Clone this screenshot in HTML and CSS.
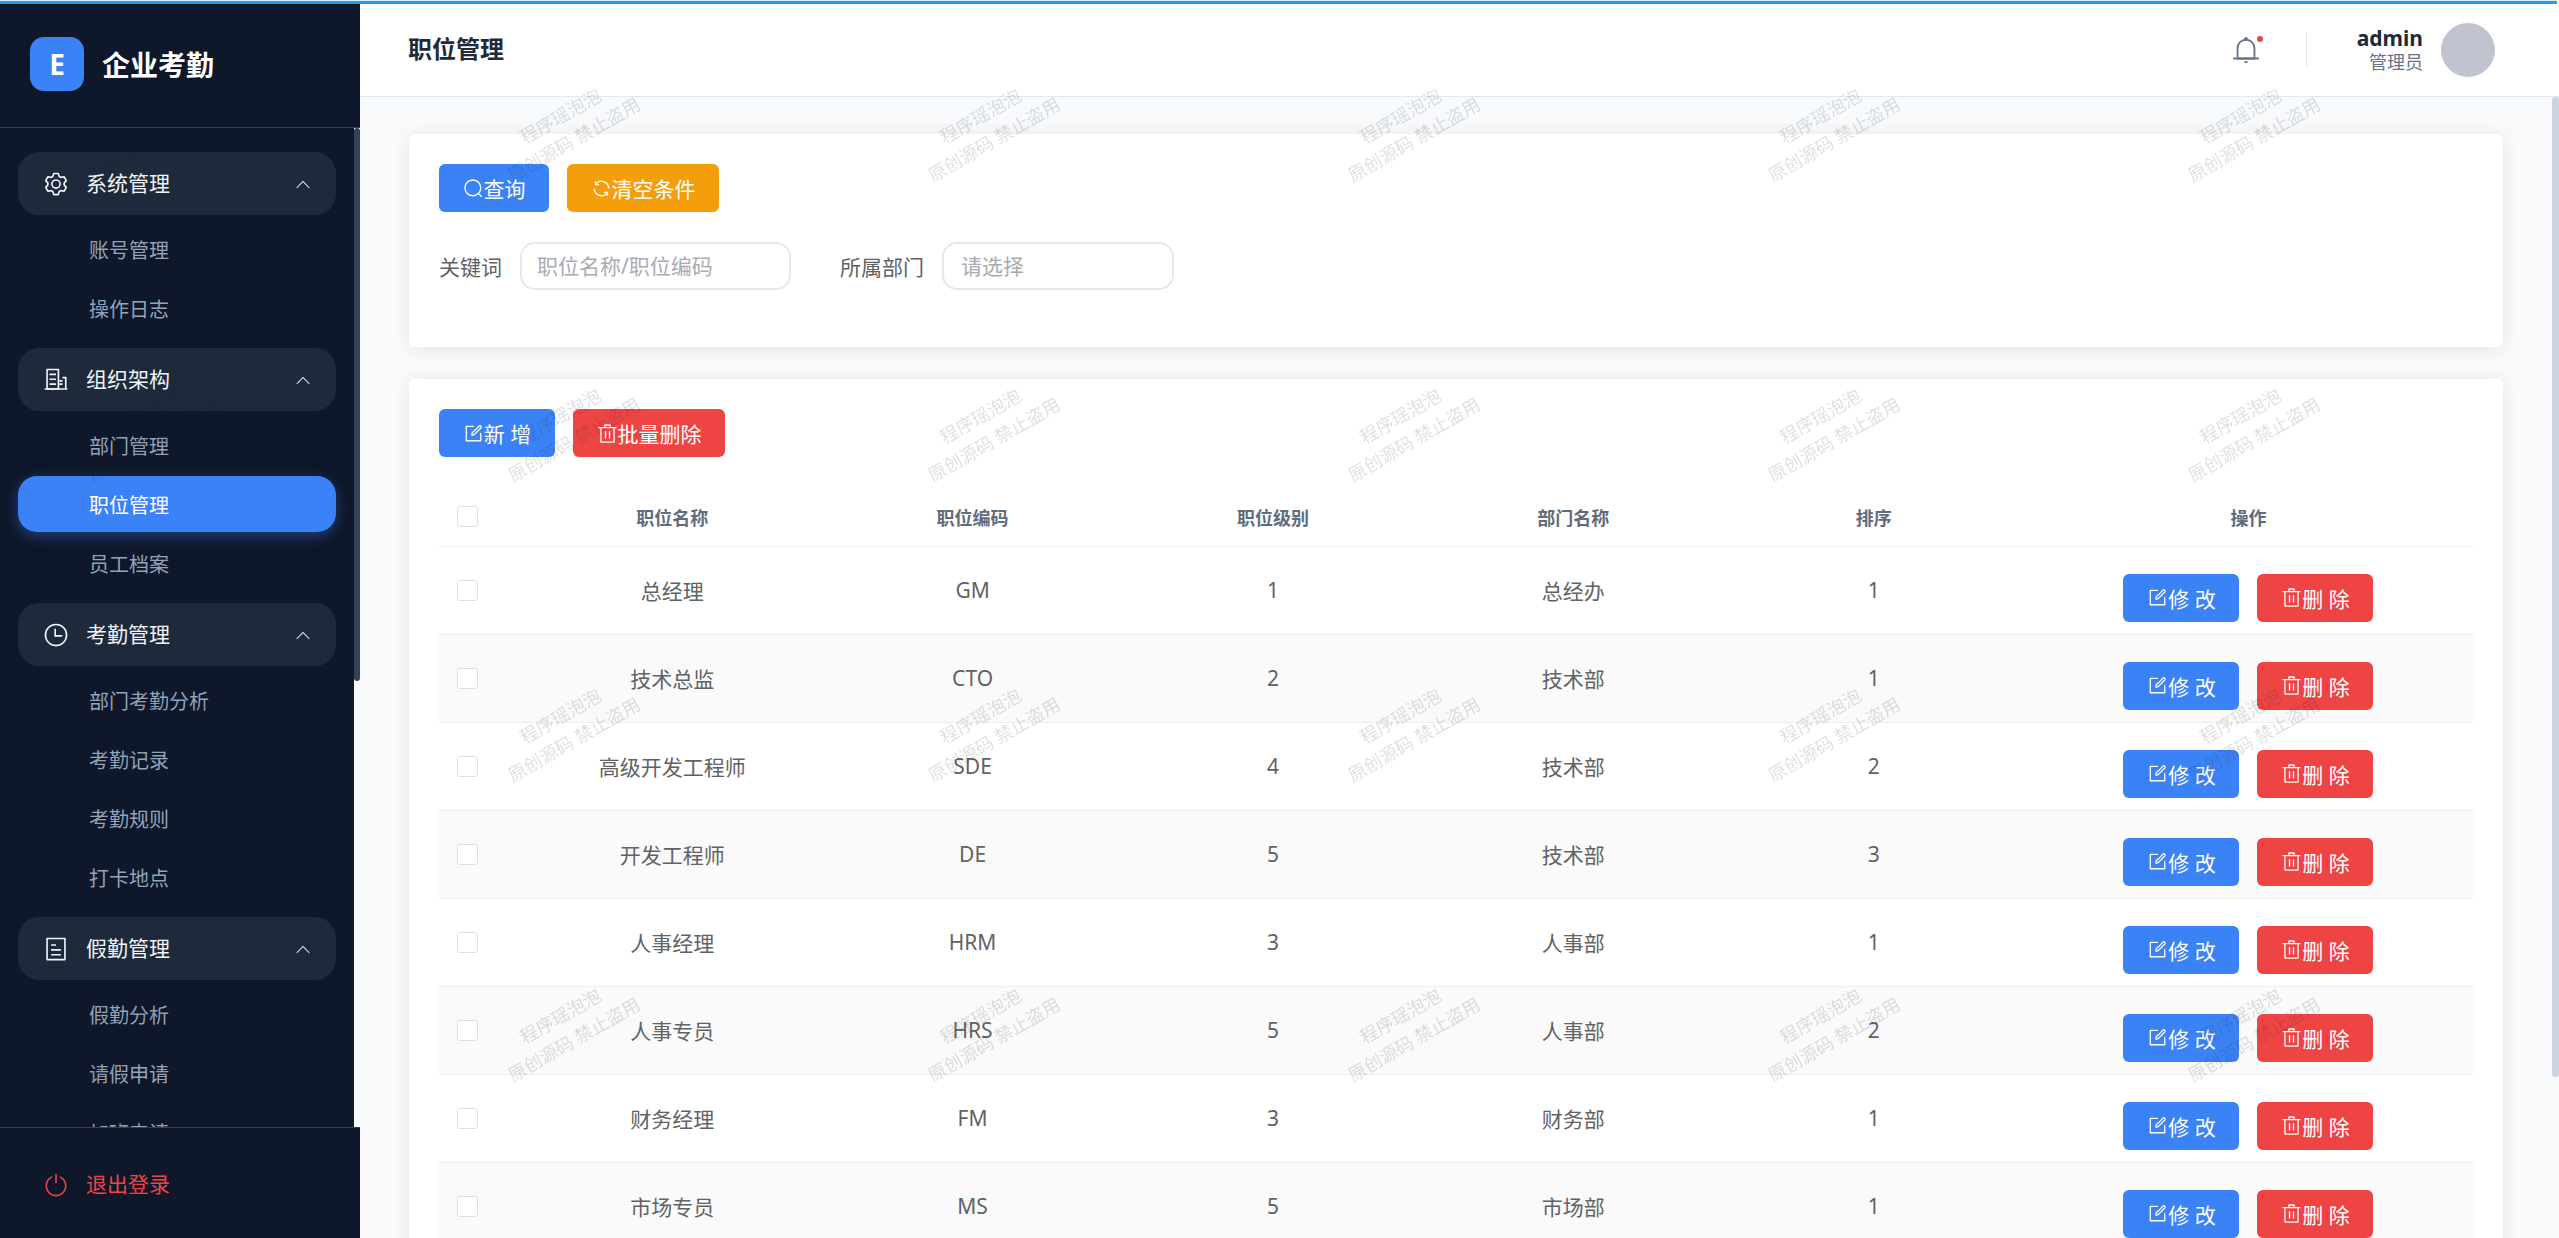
FILE: index.html
```html
<!DOCTYPE html>
<html lang="zh-CN">
<head>
<meta charset="utf-8">
<title>职位管理</title>
<link rel="stylesheet" href="styles.css">
</head>
<body>
<svg class="sprite" xmlns="http://www.w3.org/2000/svg">
  <symbol id="i-search" viewBox="0 0 1024 1024"><path d="m795.904 750.72 124.992 124.928a32 32 0 0 1-45.248 45.248L750.656 795.904a416 416 0 1 1 45.248-45.248zM480 832a352 352 0 1 0 0-704 352 352 0 0 0 0 704"/></symbol>
  <symbol id="i-refresh" viewBox="0 0 1024 1024"><path d="M771.776 794.88A384 384 0 0 1 128 512h64a320 320 0 0 0 555.712 216.448H654.72a32 32 0 1 1 0-64h149.056a32 32 0 0 1 32 32v148.928a32 32 0 1 1-64 0v-50.56zM276.288 295.616h92.992a32 32 0 0 1 0 64H220.16a32 32 0 0 1-32-32V178.56a32 32 0 0 1 64 0v50.56A384 384 0 0 1 896.128 512h-64a320 320 0 0 0-555.776-216.384z"/></symbol>
  <symbol id="i-edit" viewBox="0 0 1024 1024"><path d="M832 512a32 32 0 1 1 64 0v352a32 32 0 0 1-32 32H160a32 32 0 0 1-32-32V160a32 32 0 0 1 32-32h352a32 32 0 0 1 0 64H192v640h640z"/><path d="m469.952 554.24 52.8-7.552L847.104 222.4a32 32 0 1 0-45.248-45.248L477.44 501.44l-7.552 52.8zm422.4-422.4a96 96 0 0 1 0 135.808l-331.84 331.84a32 32 0 0 1-18.112 9.088L436.8 623.68a32 32 0 0 1-36.224-36.224l15.104-105.6a32 32 0 0 1 9.024-18.112l331.904-331.84a96 96 0 0 1 135.744 0z"/></symbol>
  <symbol id="i-delete" viewBox="0 0 1024 1024"><path d="M160 256H96a32 32 0 0 1 0-64h256V95.936a32 32 0 0 1 32-32h256a32 32 0 0 1 32 32V192h256a32 32 0 1 1 0 64h-64v672a32 32 0 0 1-32 32H192a32 32 0 0 1-32-32zm448-64v-64H416v64zM224 896h576V256H224zm192-128a32 32 0 0 1-32-32V416a32 32 0 0 1 64 0v320a32 32 0 0 1-32 32m192 0a32 32 0 0 1-32-32V416a32 32 0 0 1 64 0v320a32 32 0 0 1-32 32"/></symbol>
  <symbol id="i-up" viewBox="0 0 1024 1024"><path d="m488.832 344.32-339.84 356.672a32 32 0 0 0 0 44.16l.384.384a29.44 29.44 0 0 0 42.688 0l320-335.872 319.872 335.872a29.44 29.44 0 0 0 42.688 0l.384-.384a32 32 0 0 0 0-44.16L535.168 344.32a32 32 0 0 0-46.336 0"/></symbol>
  <symbol id="i-setting" viewBox="0 0 1024 1024"><path d="M600.704 64a32 32 0 0 1 30.464 22.208l35.2 109.376c14.784 7.232 28.928 15.36 42.432 24.512l112.384-24.192a32 32 0 0 1 34.432 15.36L944.32 364.8a32 32 0 0 1-4.032 37.504l-77.12 85.12a357.12 357.12 0 0 1 0 49.024l77.12 85.248a32 32 0 0 1 4.032 37.504l-88.704 153.6a32 32 0 0 1-34.432 15.296L708.8 803.904c-13.44 9.088-27.648 17.28-42.368 24.512l-35.264 109.376A32 32 0 0 1 600.704 960H423.296a32 32 0 0 1-30.464-22.208L357.696 828.48a351.616 351.616 0 0 1-42.56-24.64l-112.32 24.256a32 32 0 0 1-34.432-15.36L79.68 659.2a32 32 0 0 1 4.032-37.504l77.12-85.248a357.12 357.12 0 0 1 0-48.896l-77.12-85.248A32 32 0 0 1 79.68 364.8l88.704-153.6a32 32 0 0 1 34.432-15.296l112.32 24.256c13.568-9.152 27.776-17.408 42.56-24.64l35.2-109.312A32 32 0 0 1 423.232 64H600.64zm-23.424 64H446.72l-36.352 113.088-24.512 11.968a294.113 294.113 0 0 0-34.816 20.096l-22.656 15.36-116.224-25.088-65.28 113.152 79.68 88.192-1.92 27.136a293.12 293.12 0 0 0 0 40.192l1.92 27.136-79.808 88.192 65.344 113.152 116.224-25.024 22.656 15.296a294.113 294.113 0 0 0 34.816 20.096l24.512 11.968L446.72 896h130.688l36.48-113.152 24.448-11.904a288.282 288.282 0 0 0 34.752-20.096l22.592-15.296 116.288 25.024 65.28-113.152-79.744-88.192 1.92-27.136a293.12 293.12 0 0 0 0-40.256l-1.92-27.136 79.808-88.128-65.344-113.152-116.288 24.96-22.592-15.232a287.616 287.616 0 0 0-34.752-20.096l-24.448-11.904L577.344 128zM512 320a192 192 0 1 1 0 384 192 192 0 0 1 0-384m0 64a128 128 0 1 0 0 256 128 128 0 0 0 0-256"/></symbol>
  <symbol id="i-office" viewBox="0 0 1024 1024"><path d="M192 128v704h384V128zm-32-64h448a32 32 0 0 1 32 32v800H128V96a32 32 0 0 1 32-32"/><path d="M256 256h256v64H256zm0 192h256v64H256zm0 192h256v64H256zm384-128h128v64H640zm0 128h128v64H640zM768 384h128a32 32 0 0 1 32 32v416h-64V448H768zM64 832h896v64H64z"/></symbol>
  <symbol id="i-clock" viewBox="0 0 1024 1024"><path d="M512 896a384 384 0 1 0 0-768 384 384 0 0 0 0 768m0 64a448 448 0 1 1 0-896 448 448 0 0 1 0 896"/><path d="M480 256a32 32 0 0 1 32 32v256a32 32 0 0 1-64 0V288a32 32 0 0 1 32-32"/><path d="M480 512h256q32 0 32 32t-32 32H480q-32 0-32-32t32-32"/></symbol>
  <symbol id="i-tickets" viewBox="0 0 1024 1024"><path d="M192 128v768h640V128zm-32-64h704a32 32 0 0 1 32 32v832a32 32 0 0 1-32 32H160a32 32 0 0 1-32-32V96a32 32 0 0 1 32-32m160 448h384v64H320zm0-192h192v64H320zm0 384h384v64H320z"/></symbol>
  <symbol id="i-power" viewBox="0 0 1024 1024"><path d="M352 159.872V230.4a352 352 0 1 0 320 0v-70.528A416.128 416.128 0 0 1 512 960a416 416 0 0 1-160-800.128z"/><path d="M512 64q32 0 32 32v320q0 32-32 32t-32-32V96q0-32 32-32"/></symbol>
  <symbol id="i-bell" viewBox="0 0 1024 1024"><path d="M512 64a64 64 0 0 1 64 64v64H448v-64a64 64 0 0 1 64-64"/><path d="M256 768h512V448a256 256 0 1 0-512 0zm256-640a320 320 0 0 1 320 320v384H192V448a320 320 0 0 1 320-320"/><path d="M96 768h832q32 0 32 32t-32 32H96q-32 0-32-32t32-32m352 128h128a64 64 0 0 1-128 0"/></symbol>
</svg>

<div class="top-line"></div>
<div class="app">
  <aside class="sidebar">
    <div class="brand">
      <div class="logo">E</div>
      <div class="brand-name">企业考勤</div>
    </div>
    <div class="side-middle">
      <nav class="nav">
        <section class="group">
          <div class="group-head"><svg class="g-icon"><use href="#i-setting"/></svg><span class="g-title">系统管理</span><svg class="g-arrow"><use href="#i-up"/></svg></div>
          <a class="item">账号管理</a>
          <a class="item">操作日志</a>
        </section>
        <section class="group">
          <div class="group-head"><svg class="g-icon"><use href="#i-office"/></svg><span class="g-title">组织架构</span><svg class="g-arrow"><use href="#i-up"/></svg></div>
          <a class="item">部门管理</a>
          <a class="item item-active">职位管理</a>
          <a class="item">员工档案</a>
        </section>
        <section class="group">
          <div class="group-head"><svg class="g-icon"><use href="#i-clock"/></svg><span class="g-title">考勤管理</span><svg class="g-arrow"><use href="#i-up"/></svg></div>
          <a class="item">部门考勤分析</a>
          <a class="item">考勤记录</a>
          <a class="item">考勤规则</a>
          <a class="item">打卡地点</a>
        </section>
        <section class="group">
          <div class="group-head"><svg class="g-icon"><use href="#i-tickets"/></svg><span class="g-title">假勤管理</span><svg class="g-arrow"><use href="#i-up"/></svg></div>
          <a class="item">假勤分析</a>
          <a class="item">请假申请</a>
          <a class="item">加班申请</a>
        </section>
      </nav>
      <div class="side-track"><div class="side-thumb"></div></div>
    </div>
    <div class="logout"><svg class="g-icon"><use href="#i-power"/></svg><span class="g-title">退出登录</span></div>
  </aside>

  <div class="main">
    <header class="topbar">
      <h1 class="page-title">职位管理</h1>
      <div class="top-right">
        <div class="bell"><svg class="bell-icon"><use href="#i-bell"/></svg><i class="bell-dot"></i></div>
        <div class="top-divider"></div>
        <div class="user">
          <div class="user-name">admin</div>
          <div class="user-role">管理员</div>
        </div>
        <div class="avatar"></div>
      </div>
    </header>
    <div class="body-row">
      <main class="content">
        <section class="card card-filter">
          <div class="btn-row">
            <button class="btn btn-blue"><svg class="b-icon"><use href="#i-search"/></svg>查询</button>
            <button class="btn btn-orange"><svg class="b-icon"><use href="#i-refresh"/></svg>清空条件</button>
          </div>
          <div class="filter-row">
            <label class="f-label">关键词</label>
            <input class="f-input f-keyword" placeholder="职位名称/职位编码">
            <label class="f-label f-label-second">所属部门</label>
            <input class="f-input f-dept" placeholder="请选择">
          </div>
        </section>
        <section class="card">
          <div class="btn-row table-tools">
            <button class="btn btn-blue btn-wide"><svg class="b-icon"><use href="#i-edit"/></svg>新 增</button>
            <button class="btn btn-red"><svg class="b-icon"><use href="#i-delete"/></svg>批量删除</button>
          </div>
          <table class="table">
            <colgroup><col class="c-check"><col class="c-data"><col class="c-data"><col class="c-data"><col class="c-data"><col class="c-data"><col></colgroup>
            <thead>
              <tr><th class="td-check"><span class="check"></span></th><th>职位名称</th><th>职位编码</th><th>职位级别</th><th>部门名称</th><th>排序</th><th>操作</th></tr>
            </thead>
            <tbody>
              <tr><td class="td-check"><span class="check"></span></td><td>总经理</td><td>GM</td><td>1</td><td>总经办</td><td>1</td><td class="ops"><button class="btn btn-blue btn-wide"><svg class="b-icon"><use href="#i-edit"/></svg>修 改</button><button class="btn btn-red btn-wide"><svg class="b-icon"><use href="#i-delete"/></svg>删 除</button></td></tr>
              <tr><td class="td-check"><span class="check"></span></td><td>技术总监</td><td>CTO</td><td>2</td><td>技术部</td><td>1</td><td class="ops"><button class="btn btn-blue btn-wide"><svg class="b-icon"><use href="#i-edit"/></svg>修 改</button><button class="btn btn-red btn-wide"><svg class="b-icon"><use href="#i-delete"/></svg>删 除</button></td></tr>
              <tr><td class="td-check"><span class="check"></span></td><td>高级开发工程师</td><td>SDE</td><td>4</td><td>技术部</td><td>2</td><td class="ops"><button class="btn btn-blue btn-wide"><svg class="b-icon"><use href="#i-edit"/></svg>修 改</button><button class="btn btn-red btn-wide"><svg class="b-icon"><use href="#i-delete"/></svg>删 除</button></td></tr>
              <tr><td class="td-check"><span class="check"></span></td><td>开发工程师</td><td>DE</td><td>5</td><td>技术部</td><td>3</td><td class="ops"><button class="btn btn-blue btn-wide"><svg class="b-icon"><use href="#i-edit"/></svg>修 改</button><button class="btn btn-red btn-wide"><svg class="b-icon"><use href="#i-delete"/></svg>删 除</button></td></tr>
              <tr><td class="td-check"><span class="check"></span></td><td>人事经理</td><td>HRM</td><td>3</td><td>人事部</td><td>1</td><td class="ops"><button class="btn btn-blue btn-wide"><svg class="b-icon"><use href="#i-edit"/></svg>修 改</button><button class="btn btn-red btn-wide"><svg class="b-icon"><use href="#i-delete"/></svg>删 除</button></td></tr>
              <tr><td class="td-check"><span class="check"></span></td><td>人事专员</td><td>HRS</td><td>5</td><td>人事部</td><td>2</td><td class="ops"><button class="btn btn-blue btn-wide"><svg class="b-icon"><use href="#i-edit"/></svg>修 改</button><button class="btn btn-red btn-wide"><svg class="b-icon"><use href="#i-delete"/></svg>删 除</button></td></tr>
              <tr><td class="td-check"><span class="check"></span></td><td>财务经理</td><td>FM</td><td>3</td><td>财务部</td><td>1</td><td class="ops"><button class="btn btn-blue btn-wide"><svg class="b-icon"><use href="#i-edit"/></svg>修 改</button><button class="btn btn-red btn-wide"><svg class="b-icon"><use href="#i-delete"/></svg>删 除</button></td></tr>
              <tr><td class="td-check"><span class="check"></span></td><td>市场专员</td><td>MS</td><td>5</td><td>市场部</td><td>1</td><td class="ops"><button class="btn btn-blue btn-wide"><svg class="b-icon"><use href="#i-edit"/></svg>修 改</button><button class="btn btn-red btn-wide"><svg class="b-icon"><use href="#i-delete"/></svg>删 除</button></td></tr>
            </tbody>
          </table>
        </section>
      </main>
      <div class="main-track"><div class="main-thumb"></div></div>
    </div>
  </div>
</div>

<div class="watermarks">
  <div class="wm-grid">
    <div class="wm"><div class="wm-text">程序瑶泡泡<br>原创源码 禁止盗用</div></div>
    <div class="wm"><div class="wm-text">程序瑶泡泡<br>原创源码 禁止盗用</div></div>
    <div class="wm"><div class="wm-text">程序瑶泡泡<br>原创源码 禁止盗用</div></div>
    <div class="wm"><div class="wm-text">程序瑶泡泡<br>原创源码 禁止盗用</div></div>
    <div class="wm"><div class="wm-text">程序瑶泡泡<br>原创源码 禁止盗用</div></div>
    <div class="wm"><div class="wm-text">程序瑶泡泡<br>原创源码 禁止盗用</div></div>
    <div class="wm"><div class="wm-text">程序瑶泡泡<br>原创源码 禁止盗用</div></div>
    <div class="wm"><div class="wm-text">程序瑶泡泡<br>原创源码 禁止盗用</div></div>
    <div class="wm"><div class="wm-text">程序瑶泡泡<br>原创源码 禁止盗用</div></div>
    <div class="wm"><div class="wm-text">程序瑶泡泡<br>原创源码 禁止盗用</div></div>
    <div class="wm"><div class="wm-text">程序瑶泡泡<br>原创源码 禁止盗用</div></div>
    <div class="wm"><div class="wm-text">程序瑶泡泡<br>原创源码 禁止盗用</div></div>
    <div class="wm"><div class="wm-text">程序瑶泡泡<br>原创源码 禁止盗用</div></div>
    <div class="wm"><div class="wm-text">程序瑶泡泡<br>原创源码 禁止盗用</div></div>
    <div class="wm"><div class="wm-text">程序瑶泡泡<br>原创源码 禁止盗用</div></div>
    <div class="wm"><div class="wm-text">程序瑶泡泡<br>原创源码 禁止盗用</div></div>
    <div class="wm"><div class="wm-text">程序瑶泡泡<br>原创源码 禁止盗用</div></div>
    <div class="wm"><div class="wm-text">程序瑶泡泡<br>原创源码 禁止盗用</div></div>
    <div class="wm"><div class="wm-text">程序瑶泡泡<br>原创源码 禁止盗用</div></div>
    <div class="wm"><div class="wm-text">程序瑶泡泡<br>原创源码 禁止盗用</div></div>
    <div class="wm"><div class="wm-text">程序瑶泡泡<br>原创源码 禁止盗用</div></div>
    <div class="wm"><div class="wm-text">程序瑶泡泡<br>原创源码 禁止盗用</div></div>
    <div class="wm"><div class="wm-text">程序瑶泡泡<br>原创源码 禁止盗用</div></div>
    <div class="wm"><div class="wm-text">程序瑶泡泡<br>原创源码 禁止盗用</div></div>
  </div>
</div>
</body>
</html>
```

FILE: styles.css
```css
* { box-sizing: border-box; }
html, body { height: 100%; }
body {
  margin: 0;
  overflow: hidden;
  background: #fff;
  font-family: "Noto Sans", "Noto Sans CJK SC", sans-serif;
  font-size: 21px;
  color: #606266;
}
.sprite { display: none; }
svg { fill: currentColor; display: block; flex: none; }

.top-line {
  height: 4px;
  margin-right: 2px;
  border-top: 1px solid #dbeefa;
  background: #2a9ae0;
}
.app { display: flex; height: calc(100vh - 4px); }

/* sidebar */
.sidebar {
  width: 360px;
  flex: none;
  display: flex;
  flex-direction: column;
  background: #0f172a;
}
.brand {
  height: 124px;
  flex: none;
  display: flex;
  align-items: center;
  gap: 18px;
  padding: 0 0 3px 30px;
  border-bottom: 1px solid #334155;
}
.logo {
  width: 54px;
  height: 54px;
  border-radius: 14px;
  background: #3b82f6;
  color: #fff;
  font-size: 28px;
  font-weight: 700;
  display: flex;
  align-items: center;
  justify-content: center;
}
.brand-name { font-size: 28px; font-weight: 700; color: #fff; }
.side-middle { flex: 1; min-height: 0; display: flex; }
.nav { flex: 1; min-width: 0; overflow: hidden; padding: 24px 18px 0; }
.side-track { width: 6px; flex: none; background: #f8fafc; }
.side-thumb { height: 553px; background: #334155; border-radius: 3px; }
.group { margin-bottom: 12px; }
.group-head {
  height: 63px;
  display: flex;
  align-items: center;
  gap: 17px;
  padding: 0 24px 0 25px;
  margin-bottom: 6px;
  border-radius: 21px;
  background: #1e293b;
  color: #f1f5f9;
}
.g-icon { width: 26px; height: 26px; }
.g-title { flex: 1; font-size: 21px; line-height: 1; }
.g-arrow { width: 18px; height: 18px; color: #cbd5e1; }
.item {
  display: flex;
  align-items: center;
  height: 56px;
  margin-bottom: 3px;
  padding-left: 71px;
  border-radius: 19px;
  font-size: 20px;
  color: #94a3b8;
}
.item:last-child { margin-bottom: 0; }
.item-active {
  background: #3b82f6;
  color: #fff;
  box-shadow: 0 4px 14px rgba(59, 130, 246, .4);
}
.logout {
  height: 111px;
  flex: none;
  display: flex;
  align-items: center;
  gap: 17px;
  padding: 3px 0 0 43px;
  border-top: 1px solid #334155;
  color: #ef4444;
}

/* main column */
.main { flex: 1; min-width: 0; display: flex; flex-direction: column; }
.topbar {
  height: 93px;
  flex: none;
  display: flex;
  align-items: center;
  justify-content: space-between;
  padding: 0 64px 0 48px;
  background: #fff;
  border-bottom: 1px solid #e2e8f0;
}
.page-title { margin: 0 0 5px; font-size: 24px; font-weight: 700; color: #1e293b; }
.top-right { display: flex; align-items: center; }
.bell { position: relative; width: 30px; height: 30px; margin-right: 45px; color: #64748b; }
.bell-icon { width: 30px; height: 30px; }
.bell-dot {
  position: absolute;
  top: 1px;
  right: -2px;
  width: 6px;
  height: 6px;
  border-radius: 50%;
  background: #ef4444;
}
.top-divider { width: 1px; height: 36px; background: #e2e8f0; margin-right: 50px; }
.user { text-align: right; margin: 0 18px 3px 0; }
.user-name { font-size: 21px; font-weight: 700; line-height: 26px; color: #1e293b; }
.user-role { font-size: 18px; line-height: 22px; color: #64748b; }
.avatar { width: 54px; height: 54px; border-radius: 50%; background: #c1c4cf; }

.body-row { flex: 1; min-height: 0; display: flex; background: #f8fafc; }
.content { flex: 1; min-width: 0; overflow: hidden; padding: 37px 49px 0; }
.main-track { width: 7px; flex: none; }
.main-thumb { height: 980px; background: #cbd5e1; border-radius: 3px; }

/* cards */
.card {
  background: #fff;
  border-radius: 6px;
  padding: 30px;
  margin-bottom: 32px;
  box-shadow: 0 2px 20px rgba(0, 0, 0, .09);
}
.card-filter { height: 213px; }
.btn-row { display: flex; gap: 18px; }
.btn {
  height: 48px;
  padding: 0 23.5px;
  border: 0;
  border-radius: 6px;
  display: inline-flex;
  align-items: center;
  justify-content: center;
  color: #fff;
  font: inherit;
  font-size: 21px;
}
.btn-blue { background: #3b82f6; }
.btn-orange { background: #f59e0b; }
.btn-red { background: #ef4444; }
.btn-wide { width: 116px; padding: 0; }
.b-icon { width: 21px; height: 21px; }

.filter-row { display: flex; align-items: center; margin-top: 30px; }
.f-label { margin-right: 18px; font-size: 21px; color: #606266; }
.f-label-second { margin-left: 49px; }
.f-input {
  height: 48px;
  border: 2px solid #e2e8f0;
  border-radius: 15px;
  padding: 0 15px;
  font: inherit;
  font-size: 21px;
  outline: none;
  background: #fff;
}
.f-input::placeholder { color: #a8abb2; }
.f-keyword { width: 271px; }
.f-dept { width: 232px; padding-left: 17px; }

/* table */
.table-tools { margin-bottom: 31px; }
.table { width: 100%; table-layout: fixed; border-collapse: collapse; }
.c-check { width: 83px; }
.c-data { width: 300.4px; }
.table th {
  height: 58px;
  padding: 0;
  text-align: center;
  font-size: 18px;
  font-weight: 700;
  color: #606b7c;
  border-bottom: 1px solid #ebeef5;
}
.table td {
  height: 88px;
  padding: 0 0 1px;
  text-align: center;
  font-size: 21px;
  color: #606266;
  border-bottom: 1px solid #ebeef5;
}
.table tbody tr:nth-child(even) { background: #fafafa; }
.table th.td-check, .table td.td-check { text-align: left; padding: 0 0 0 18px; }
.check {
  display: block;
  width: 21px;
  height: 21px;
  border: 1px solid #dcdfe6;
  border-radius: 3px;
  background: #fff;
}
.table td.ops { vertical-align: top; padding-top: 27px; }
.ops .btn + .btn { margin-left: 18px; }

/* watermark */
.watermarks {
  position: fixed;
  inset: 0;
  overflow: hidden;
  pointer-events: none;
}
.wm-grid {
  display: grid;
  grid-template-columns: repeat(6, 420px);
  grid-auto-rows: 300px;
  margin: -22.5px 0 0 -62.5px;
}
.wm { display: flex; align-items: center; justify-content: center; }
.wm-text {
  transform: rotate(-30deg);
  text-align: center;
  white-space: nowrap;
  font-size: 18px;
  line-height: 27px;
  color: rgba(30, 41, 59, .15);
}
```
